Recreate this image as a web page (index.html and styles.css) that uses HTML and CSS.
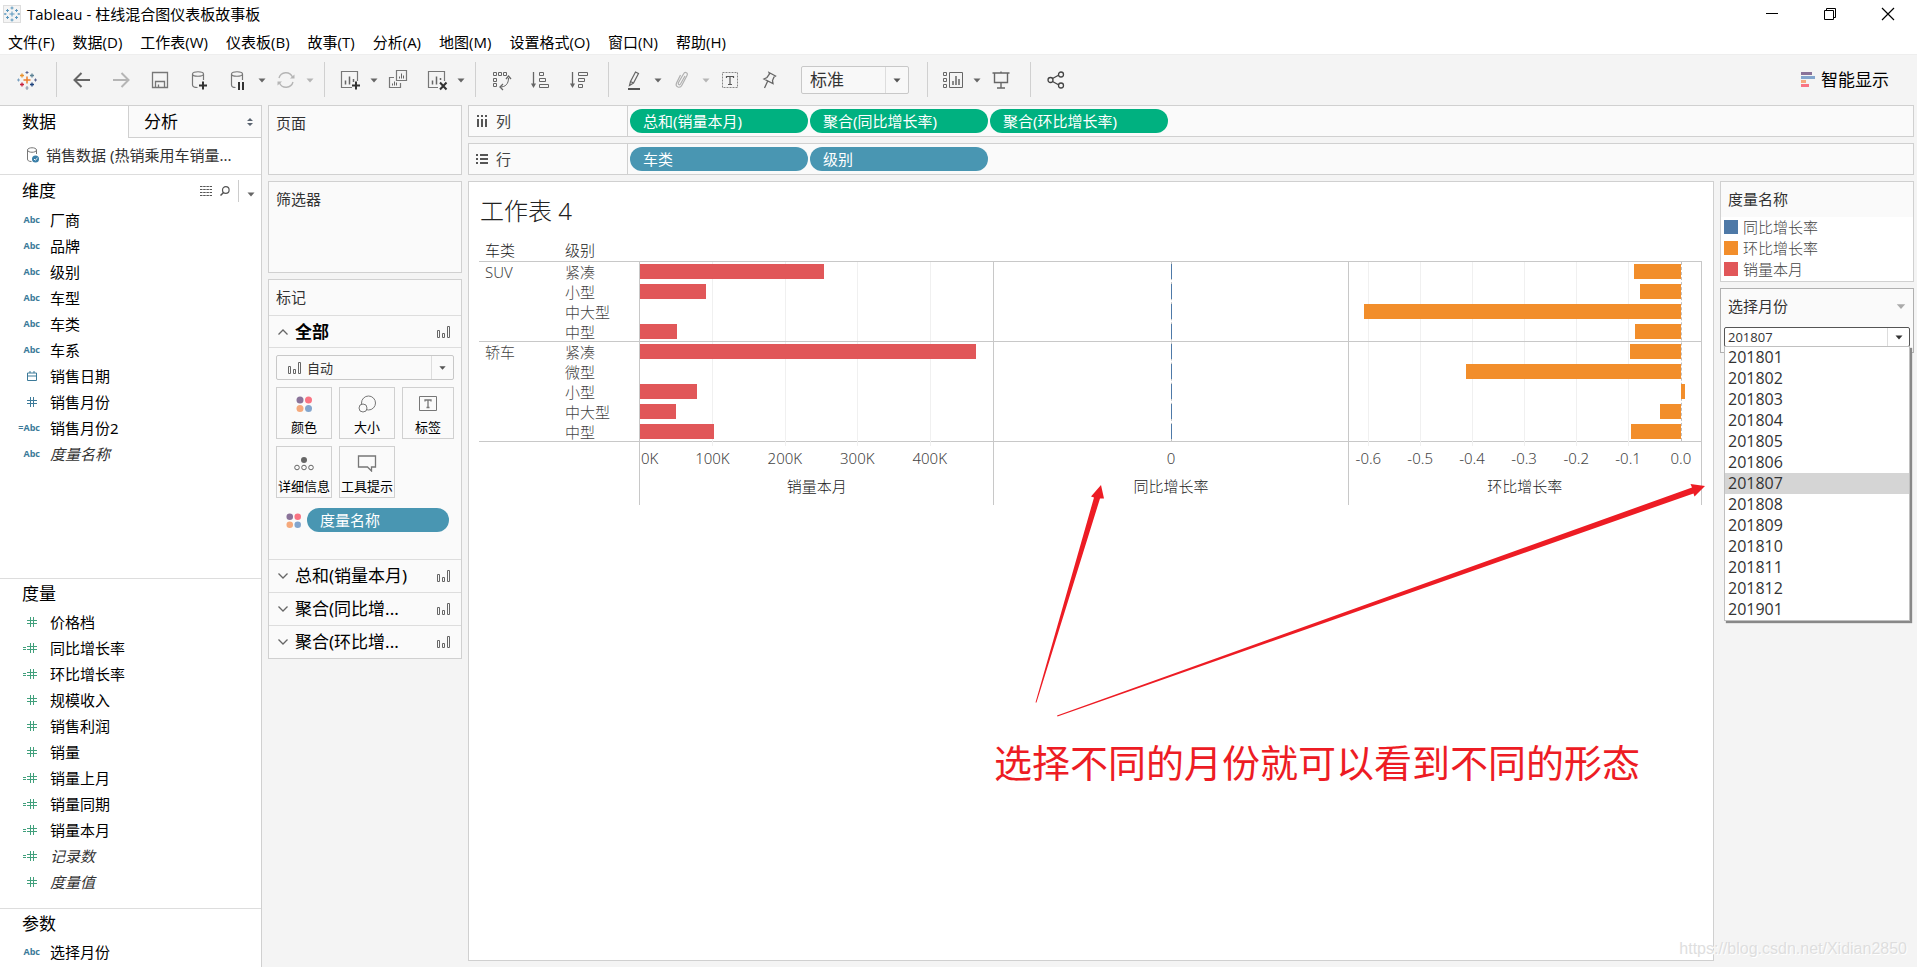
FILE: index.html
```html
<!DOCTYPE html>
<html lang="zh-CN">
<head>
<meta charset="utf-8">
<title>Tableau - 柱线混合图仪表板故事板</title>
<link rel="stylesheet" href="styles.css">
</head>
<body>
<svg class="defs" width="0" height="0" aria-hidden="true">
  <defs>
    <symbol id="caret" viewBox="0 0 10 10"><path d="M1.500 3.500h7L5 7.500z" fill="currentColor"/></symbol>
    <symbol id="hash" viewBox="0 0 10 10"><path d="M3.500 0v10M6.500 0v10M0 3.500h10M0 6.500h10" stroke="currentColor" fill="none"/></symbol>
    <symbol id="calc" viewBox="0 0 14 10"><path d="M7.500 0v10M10.500 0v10M4 3.500h10M4 6.500h10M0 4.500h3M0 6.500h3" stroke="currentColor" fill="none"/></symbol>
    <symbol id="bars" viewBox="0 0 14 14"><path d="M.5 5.500h2v7h-2zM5.500 8.500h2v4h-2zM10.500 1.500h2v11h-2z" stroke="#666" fill="none"/></symbol>
    <symbol id="dots" viewBox="0 0 16 16"><circle cx="4" cy="4" r="3.500" fill="#8a7399"/><circle cx="12.500" cy="4" r="3.500" fill="#f97483"/><circle cx="4" cy="12.500" r="3.500" fill="#f5a97c"/><circle cx="12.500" cy="12.500" r="3.500" fill="#83a5cd"/></symbol>
    <symbol id="chev" viewBox="0 0 10 10"><path d="M.5 2.500L5 7l4.500-4.500" stroke="#666" stroke-width="1.300" fill="none"/></symbol>
  </defs>
</svg>
<div class="app">
  <header class="titlebar">
    <svg class="appicon" viewBox="0 0 18 18"><rect x=".5" y=".5" width="17" height="17" fill="#f4f4f4" stroke="#ddd"/><path d="M9 6.500v5M6.500 9h5M9 1.500v3M7.500 3h3M9 13.500v3M7.500 15h3M4.500 4v3M3 5.500h3M13.500 4v3M12 5.500h3M4.500 11v3M3 12.500h3M13.500 11v3M12 12.500h3M2 8v2M1.500 9h2M16 8v2M14.500 9h2" stroke="#5a97bd" fill="none"/></svg>
    <h1 class="apptitle">Tableau - 柱线混合图仪表板故事板</h1>
    <div class="winbtns">
      <button type="button" aria-label="最小化"><svg viewBox="0 0 14 14"><path d="M1 6.500h12" stroke="#000"/></svg></button>
      <button type="button" aria-label="还原"><svg viewBox="0 0 14 14"><path d="M1.500 3.500h9v9h-9zM3.500 3.500v-2h9v9h-2" stroke="#000" fill="none"/></svg></button>
      <button type="button" aria-label="关闭"><svg viewBox="0 0 14 14"><path d="M1 1l12 12M13 1L1 13" stroke="#000" stroke-width="1.200"/></svg></button>
    </div>
  </header>
  <nav class="menubar">
    <button type="button">文件(F)</button><button type="button">数据(D)</button><button type="button">工作表(W)</button><button type="button">仪表板(B)</button><button type="button">故事(T)</button><button type="button">分析(A)</button><button type="button">地图(M)</button><button type="button">设置格式(O)</button><button type="button">窗口(N)</button><button type="button">帮助(H)</button>
  </nav>
  <div class="toolbar">
    <button type="button" class="tb" aria-label="起始页"><svg viewBox="0 0 20 20" fill="none"><path d="M10 6.500v7M6.500 10h7" stroke="#eb7c2a" stroke-width="1.500"/><path d="M10 1v3M8.500 2.500h3" stroke="#5b6591"/><path d="M10 16v4M8.500 18h3" stroke="#8692a8"/><path d="M5 3.500v4M3 5.500h4" stroke="#e8912b" stroke-width="1.300"/><path d="M15 3.500v4M13 5.500h4" stroke="#5d8396" stroke-width="1.300"/><path d="M5 12.500v4M3 14.500h4" stroke="#c9233f" stroke-width="1.300"/><path d="M15 12.500v4M13 14.500h4" stroke="#1f447e" stroke-width="1.300"/><path d="M1.500 8.500v3M0 10h3" stroke="#7ba0c0"/><path d="M18.500 8.500v3M17 10h3" stroke="#5b6591"/></svg></button>
    <span class="sep"></span>
    <button type="button" class="tb" aria-label="后退"><svg viewBox="0 0 20 20"><path d="M18 10H3M9.500 3L2.500 10l7 7" stroke="#666" stroke-width="2" fill="none"/></svg></button>
    <button type="button" class="tb" aria-label="前进"><svg viewBox="0 0 20 20"><path d="M2 10h15M10.500 3l7 7-7 7" stroke="#b5b5b5" stroke-width="2" fill="none"/></svg></button>
    <button type="button" class="tb" aria-label="保存"><svg viewBox="0 0 20 20"><path d="M2.500 2.500h15v15h-15zM5.500 17.500v-6h9v6M8.500 17.500v-3" stroke="#777" fill="none" stroke-width="1.300"/></svg></button>
    <button type="button" class="tb" aria-label="新建数据源"><svg viewBox="0 0 20 20"><path d="M3.500 4v11c0 1.500 2 2.500 5 2.500M14.500 4v6M3.500 4c0-3 11-3 11 0s-11 3-11 0" stroke="#777" fill="none" stroke-width="1.200"/><path d="M14 11.500v8M10 15.500h8" stroke="#333" stroke-width="2"/></svg></button>
    <span class="split"><button type="button" class="tb" aria-label="暂停自动更新"><svg viewBox="0 0 20 20"><path d="M3.500 4v11c0 1.500 2 2.500 4 2.500M14.500 4v6M3.500 4c0-3 11-3 11 0s-11 3-11 0" stroke="#777" fill="none" stroke-width="1.200"/><path d="M11 12v8M15 12v8" stroke="#333" stroke-width="2"/></svg></button><button type="button" class="ct" aria-label="更多"><svg><use href="#caret"/></svg></button></span>
    <span class="split off"><button type="button" class="tb" aria-label="刷新"><svg viewBox="0 0 20 20"><path d="M3 8a7.200 7.200 0 0 1 13.500-1M17 12a7.200 7.200 0 0 1-13.500 1" stroke="#b5b5b5" fill="none" stroke-width="1.400"/><path d="M18.500 4.500v4h-4.500zM1.500 15.500v-4h4.500z" fill="#b5b5b5"/></svg></button><button type="button" class="ct" aria-label="更多"><svg><use href="#caret"/></svg></button></span>
    <span class="sep"></span>
    <span class="split"><button type="button" class="tb" aria-label="新建工作表"><svg viewBox="0 0 20 20"><path d="M12 17.500H1.500v-16h16V11" stroke="#777" fill="none" stroke-width="1.200"/><path d="M5.500 14.500v-4M9.500 14.500v-8M13.500 12v-3" stroke="#666" stroke-width="1.500"/><path d="M16 11.500v8M12 15.500h8" stroke="#333" stroke-width="2"/></svg></button><button type="button" class="ct" aria-label="更多"><svg><use href="#caret"/></svg></button></span>
    <button type="button" class="tb" aria-label="复制工作表"><svg viewBox="0 0 20 20"><path d="M8.500 .5h10v10h-10zM6 7.500H1.500v10h11V13" stroke="#777" fill="none" stroke-width="1.200"/><path d="M11.500 8.500v-2M13.500 8.500v-5M15.500 8.500v-3M4.500 15.500v-2M6.500 15.500v-4M8.500 15.500v-3" stroke="#666"/></svg></button>
    <span class="split"><button type="button" class="tb" aria-label="清除工作表"><svg viewBox="0 0 20 20"><path d="M11 17.500H1.500v-16h16V11" stroke="#777" fill="none" stroke-width="1.200"/><path d="M5.500 14.500v-4M9.500 14.500v-8M13.500 10v-2" stroke="#666" stroke-width="1.500"/><path d="M13 12.500l6.500 7M19.500 12.500l-6.500 7" stroke="#333" stroke-width="2"/></svg></button><button type="button" class="ct" aria-label="更多"><svg><use href="#caret"/></svg></button></span>
    <span class="sep"></span>
    <button type="button" class="tb" aria-label="交换行和列"><svg viewBox="0 0 20 20"><path d="M2.500 2.500h3v3h-3zM7.500 2.500h3v3h-3zM12.500 2.500h3v3h-3zM2.500 8.500h3v3h-3zM2.500 13.500h3v3h-3zM17.500 8c0 6-3 9-8.500 9" stroke="#666" fill="none"/><path d="M15 9l2.500-3L20 9M12 14l-3 3 3 3" stroke="#666" stroke-width="1.300" fill="none"/></svg></button>
    <button type="button" class="tb" aria-label="升序排序"><svg viewBox="0 0 20 20"><path d="M3.500 2v14" stroke="#666" fill="none" stroke-width="1.300"/><path d="M1 13.500h5L3.500 18z" fill="#666"/><path d="M9.500 2.500h4v3h-4zM9.500 8.500h6v3h-6zM9.500 14.500h9v3h-9z" stroke="#666" fill="none"/></svg></button>
    <button type="button" class="tb" aria-label="降序排序"><svg viewBox="0 0 20 20"><path d="M3.500 2v14" stroke="#666" fill="none" stroke-width="1.300"/><path d="M1 13.500h5L3.500 18z" fill="#666"/><path d="M9.500 2.500h9v3h-9zM9.500 8.500h6v3h-6zM9.500 14.500h4v3h-4z" stroke="#666" fill="none"/></svg></button>
    <span class="sep"></span>
    <span class="split"><button type="button" class="tb" aria-label="突出显示"><svg viewBox="0 0 20 20"><path d="M5.500 15.500l1-4L11.500 2l3 1.500L9.500 13zM6.500 11.500l3 1.500" stroke="#666" fill="none" stroke-width="1.200"/><path d="M4 19h12" stroke="#555" stroke-width="2"/></svg></button><button type="button" class="ct" aria-label="更多"><svg><use href="#caret"/></svg></button></span>
    <span class="split off"><button type="button" class="tb" aria-label="组成员"><svg viewBox="0 0 20 20"><path d="M13 6l-4.500 8c-1 1.500-3 .5-2-1.500L11.500 4c1.500-3 5-1 3.500 1.500l-5 9.500c-2 4-7 2-5.500-2L8.500 5" stroke="#b0b0b0" fill="none" stroke-width="1.200"/></svg></button><button type="button" class="ct" aria-label="更多"><svg><use href="#caret"/></svg></button></span>
    <button type="button" class="tb" aria-label="显示标记标签"><svg viewBox="0 0 20 20"><path d="M2.500 2.500h15v15h-15z" stroke="#888" stroke-dasharray="2 1" fill="none"/><path d="M6.500 8V6.500h7V8M10 6.500v8M8 14.500h4" stroke="#555" stroke-width="1.200" fill="none"/></svg></button>
    <button type="button" class="tb" aria-label="固定"><svg viewBox="0 0 20 20"><path d="M10 2.500l6.500 3.500-1.500 1-1.500 3.500.5 3-9-4.500L8 7.500 10.500 4zM8.500 11.500L5.500 18" stroke="#666" fill="none" stroke-width="1.300"/></svg></button>
    <span class="fit"><select aria-label="适合"><option>标准</option></select><svg><use href="#caret"/></svg></span>
    <span class="sep"></span>
    <span class="split"><button type="button" class="tb" aria-label="显示卡"><svg viewBox="0 0 20 20"><path d="M.5 2.500h3v3h-3zM.5 8.500h3v3h-3zM.5 14.500h3v3h-3zM6.500 2.500h13v15h-13z" stroke="#666" fill="none"/><path d="M10 15v-4M13 15V6M16 15V9" stroke="#666" stroke-width="1.500"/></svg></button><button type="button" class="ct" aria-label="更多"><svg><use href="#caret"/></svg></button></span>
    <button type="button" class="tb" aria-label="演示模式"><svg viewBox="0 0 20 20"><path d="M1.500 3h17M3.500 3v9.500h13V3M10 1.500V3M10 12.500V18M6 18h8" stroke="#666" fill="none" stroke-width="1.400"/></svg></button>
    <span class="sep"></span>
    <button type="button" class="tb" aria-label="共享"><svg viewBox="0 0 20 20"><path d="M6.500 8.500l6.500-3.500M6.500 11.500l6.500 3.500" stroke="#444" stroke-width="1.300"/><circle cx="4.500" cy="10" r="2.500" stroke="#444" fill="none" stroke-width="1.300"/><circle cx="15" cy="4.500" r="2.500" stroke="#444" fill="none" stroke-width="1.300"/><circle cx="15" cy="15.500" r="2.500" stroke="#444" fill="none" stroke-width="1.300"/></svg></button>
    <button type="button" class="showme"><svg viewBox="0 0 14 16"><path d="M0 0h11v3H0z" fill="#8a7399"/><path d="M0 4h14v3H0z" fill="#83a5cd"/><path d="M0 8h5v3H0z" fill="#f5a97c"/><path d="M0 12h8v3H0z" fill="#f97483"/></svg>智能显示</button>
  </div>
  <div class="body">
    <aside class="datapane">
      <div class="tabs">
        <button type="button" class="tab on">数据</button>
        <button type="button" class="tab">分析<svg viewBox="0 0 6 8"><path d="M0 3l3-3 3 3zM0 5l3 3 3-3z" fill="#5a6470"/></svg></button>
      </div>
      <div class="source"><svg viewBox="0 0 14 16"><path d="M1.500 3v9c0 1.500 1 2.500 4 2.500M10.500 3v4M1.500 3c0-3 9-3 9 0s-9 3-9 0" stroke="#777" fill="none"/><circle cx="9.500" cy="12" r="3.500" fill="#3a7fa8"/><path d="M8 12l1.200 1.200L11.500 11" stroke="#fff" fill="none"/></svg>销售数据 (热销乘用车销量...</div>
      <div class="sections">
        <section class="sec dim">
          <div class="sechead"><h2>维度</h2>
            <div class="tools">
              <svg class="grid" viewBox="0 0 12 10"><path d="M0 .5h12M0 3.500h12M0 6.500h12M0 9.500h12" stroke="#555" stroke-dasharray="2.500 .7"/></svg>
              <svg class="mag" viewBox="0 0 10 10"><circle cx="5.800" cy="4" r="3.300" stroke="#555" fill="none" stroke-width="1.200"/><path d="M3.500 6.500L.5 9.500" stroke="#555" stroke-width="1.500"/></svg>
              <button type="button" class="ct more" aria-label="维度菜单"><svg><use href="#caret"/></svg></button>
            </div>
          </div>
          <ul class="fields blue">
            <li><span class="ic">Abc</span>厂商</li><li><span class="ic">Abc</span>品牌</li><li><span class="ic">Abc</span>级别</li><li><span class="ic">Abc</span>车型</li><li><span class="ic">Abc</span>车类</li><li><span class="ic">Abc</span>车系</li>
            <li><span class="ic n"><svg class="h" viewBox="0 0 10 10"><path d="M.5 2h9v7.500h-9zM.5 5h9M3 0v2M7 0v2" stroke="currentColor" fill="none"/></svg></span>销售日期</li>
            <li><span class="ic n"><svg class="h"><use href="#hash"/></svg></span>销售月份</li>
            <li><span class="ic">=Abc</span>销售月份2</li>
            <li class="it"><span class="ic">Abc</span>度量名称</li>
          </ul>
        </section>
        <section class="sec">
          <div class="sechead"><h2>度量</h2></div>
          <ul class="fields green">
            <li><span class="ic n"><svg class="h"><use href="#hash"/></svg></span>价格档</li>
            <li><span class="ic n"><svg class="c"><use href="#calc"/></svg></span>同比增长率</li>
            <li><span class="ic n"><svg class="c"><use href="#calc"/></svg></span>环比增长率</li>
            <li><span class="ic n"><svg class="h"><use href="#hash"/></svg></span>规模收入</li>
            <li><span class="ic n"><svg class="h"><use href="#hash"/></svg></span>销售利润</li>
            <li><span class="ic n"><svg class="h"><use href="#hash"/></svg></span>销量</li>
            <li><span class="ic n"><svg class="c"><use href="#calc"/></svg></span>销量上月</li>
            <li><span class="ic n"><svg class="c"><use href="#calc"/></svg></span>销量同期</li>
            <li><span class="ic n"><svg class="c"><use href="#calc"/></svg></span>销量本月</li>
            <li class="it"><span class="ic n"><svg class="c"><use href="#calc"/></svg></span>记录数</li>
            <li class="it"><span class="ic n"><svg class="h"><use href="#hash"/></svg></span>度量值</li>
          </ul>
        </section>
        <section class="sec">
          <div class="sechead"><h2>参数</h2></div>
          <ul class="fields blue"><li><span class="ic">Abc</span>选择月份</li></ul>
        </section>
      </div>
    </aside>
    <div class="cards">
      <section class="card pages"><h3>页面</h3></section>
      <section class="card filters"><h3>筛选器</h3></section>
      <section class="card marks">
        <h3>标记</h3>
        <button type="button" class="mrow all"><svg class="chev up"><use href="#chev"/></svg><b>全部</b><svg class="bars"><use href="#bars"/></svg></button>
        <div class="mbody">
          <div class="mtype"><svg class="bars"><use href="#bars"/></svg><select aria-label="标记类型"><option>自动</option></select><svg class="cr"><use href="#caret"/></svg></div>
          <div class="mgrid">
            <button type="button"><svg viewBox="0 0 20 18"><use href="#dots" x="2" y="1" width="16" height="16"/></svg>颜色</button>
            <button type="button"><svg viewBox="0 0 20 18"><circle cx="11.500" cy="8" r="7" stroke="#777" fill="none"/><circle cx="6" cy="13" r="4" stroke="#777" fill="#fafafa"/></svg>大小</button>
            <button type="button"><svg viewBox="0 0 20 18"><path d="M1.500 1.500h17v14h-17z" stroke="#777" fill="none"/><path d="M7 6.500V5h6v1.500M10 5v7.500M8.500 12.500h3" stroke="#777" stroke-width="1.300" fill="none"/></svg>标签</button>
            <button type="button"><svg viewBox="0 0 20 18"><circle cx="10" cy="6" r="3" fill="#666"/><g fill="none" stroke="#666"><circle cx="3" cy="13.500" r="2.300"/><circle cx="10" cy="13.500" r="2.300"/><circle cx="17" cy="13.500" r="2.300"/></g></svg>详细信息</button>
            <button type="button"><svg viewBox="0 0 20 18"><path d="M1.500 2h17v11h-4v4l-4-4h-9z" stroke="#777" stroke-width="1.300" fill="none"/></svg>工具提示</button>
          </div>
          <div class="mpill"><svg><use href="#dots"/></svg><button type="button" class="pill blue">度量名称</button></div>
        </div>
        <button type="button" class="mrow"><svg class="chev"><use href="#chev"/></svg><span>总和(销量本月)</span><svg class="bars"><use href="#bars"/></svg></button>
        <button type="button" class="mrow"><svg class="chev"><use href="#chev"/></svg><span>聚合(同比增...</span><svg class="bars"><use href="#bars"/></svg></button>
        <button type="button" class="mrow"><svg class="chev"><use href="#chev"/></svg><span>聚合(环比增...</span><svg class="bars"><use href="#bars"/></svg></button>
      </section>
    </div>
    <main class="main">
      <div class="shelf"><div class="shlabel"><svg viewBox="0 0 12 12"><path d="M2 0v2M6 0v2M10 0v2M2 4v8M6 4v8M10 4v8" stroke="#555" stroke-width="2"/></svg>列</div><button type="button" class="pill green">总和(销量本月)</button><button type="button" class="pill green">聚合(同比增长率)</button><button type="button" class="pill green">聚合(环比增长率)</button></div>
      <div class="shelf"><div class="shlabel"><svg viewBox="0 0 12 12"><path d="M0 2h2M0 6h2M0 10h2M4 2h8M4 6h8M4 10h8" stroke="#555" stroke-width="2"/></svg>行</div><button type="button" class="pill blue">车类</button><button type="button" class="pill blue">级别</button></div>
      <div class="work">
        <section class="sheet">
          <h2 class="sheettitle">工作表 4</h2>
          <div class="viz">
            <div class="hd">车类</div><div class="hd">级别</div><div class="hd fill"></div>
            <div class="cats"><div class="grp g4">SUV</div><div class="grp g5">轿车</div></div>
            <div class="cats"><div class="grp g4"><span>紧凑</span><span>小型</span><span>中大型</span><span>中型</span></div><div class="grp g5"><span>紧凑</span><span>微型</span><span>小型</span><span>中大型</span><span>中型</span></div></div>
            <div class="plot">
              <i class="gl" style="left:20.500%"></i><i class="gl" style="left:41%"></i><i class="gl" style="left:61.500%"></i><i class="gl" style="left:82%"></i>
              <div class="row"><i class="bar red" style="width:52%"></i></div>
              <div class="row"><i class="bar red" style="width:18.700%"></i></div>
              <div class="row"></div>
              <div class="row"><i class="bar red" style="width:10.500%"></i></div>
              <div class="row top"><i class="bar red" style="width:95%"></i></div>
              <div class="row"></div>
              <div class="row"><i class="bar red" style="width:16.200%"></i></div>
              <div class="row"><i class="bar red" style="width:10.200%"></i></div>
              <div class="row"><i class="bar red" style="width:21%"></i></div>
            </div>
            <div class="plot">
              <i class="zero" style="left:50%"></i>
              <div class="row"><i class="thin"></i></div><div class="row"><i class="thin"></i></div><div class="row"><i class="thin"></i></div><div class="row"><i class="thin"></i></div><div class="row top"><i class="thin"></i></div><div class="row"><i class="thin"></i></div><div class="row"><i class="thin"></i></div><div class="row"><i class="thin"></i></div><div class="row"><i class="thin"></i></div>
            </div>
            <div class="plot last">
              <i class="gl" style="left:5.600%"></i><i class="gl" style="left:20.300%"></i><i class="gl" style="left:35%"></i><i class="gl" style="left:49.800%"></i><i class="gl" style="left:64.600%"></i><i class="gl" style="left:79.300%"></i><i class="zero" style="left:94.300%"></i>
              <div class="row"><i class="bar org" style="margin-left:81%;width:13.300%"></i></div>
              <div class="row"><i class="bar org" style="margin-left:82.600%;width:11.700%"></i></div>
              <div class="row"><i class="bar org" style="margin-left:4.400%;width:89.900%"></i></div>
              <div class="row"><i class="bar org" style="margin-left:81.300%;width:13%"></i></div>
              <div class="row top"><i class="bar org" style="margin-left:79.800%;width:14.500%"></i></div>
              <div class="row"><i class="bar org" style="margin-left:33.200%;width:61.100%"></i></div>
              <div class="row"><i class="bar org" style="margin-left:94.300%;width:1.100%"></i></div>
              <div class="row"><i class="bar org" style="margin-left:88.400%;width:5.900%"></i></div>
              <div class="row"><i class="bar org" style="margin-left:80.200%;width:14.100%"></i></div>
            </div>
            <div class="foot"></div>
            <div class="axis"><div class="ticks"><span class="first">0K</span><span style="left:20.500%">100K</span><span style="left:41%">200K</span><span style="left:61.500%">300K</span><span style="left:82%">400K</span></div><p>销量本月</p></div>
            <div class="axis"><div class="ticks"><span style="left:50%">0</span></div><p>同比增长率</p></div>
            <div class="axis last"><div class="ticks"><span style="left:5.600%">-0.6</span><span style="left:20.300%">-0.5</span><span style="left:35%">-0.4</span><span style="left:49.800%">-0.3</span><span style="left:64.600%">-0.2</span><span style="left:79.300%">-0.1</span><span style="left:94.300%">0.0</span></div><p>环比增长率</p></div>
          </div>
          <svg class="arrows" viewBox="0 0 690 240" fill="#ed1c24"><path d="M14.500 221.500L73 16.500 70 15.500 80 4 83 17.500 79 17.500 15.500 221.500z"/><path d="M36 234.500L671 6.500 669.500 3 684 5 673.500 15.500 672.500 12.500 36.500 235.500z"/></svg>
          <p class="note">选择不同的月份就可以看到不同的形态</p>
        </section>
        <aside class="side">
          <section class="legend"><h3>度量名称</h3>
            <ul><li><i class="sw b"></i><span>同比增长率</span></li><li><i class="sw o"></i><span>环比增长率</span></li><li><i class="sw r"></i><span>销量本月</span></li></ul>
          </section>
          <section class="param">
            <h3><label for="month">选择月份</label><svg><use href="#caret"/></svg></h3>
            <div class="combo"><select id="month"><option>201807</option></select><svg><use href="#caret"/></svg>
              <ul class="list" role="listbox" aria-label="选择月份">
                <li role="option">201801</li><li role="option">201802</li><li role="option">201803</li><li role="option">201804</li><li role="option">201805</li><li role="option">201806</li><li role="option" aria-selected="true" class="sel">201807</li><li role="option">201808</li><li role="option">201809</li><li role="option">201810</li><li role="option">201811</li><li role="option">201812</li><li role="option">201901</li>
              </ul>
            </div>
          </section>
        </aside>
      </div>
    </main>
  </div>
  <div class="mark">https://blog.csdn.net/Xidian2850</div>
</div>
</body>
</html>
```

FILE: styles.css
```css
* { box-sizing: border-box; margin: 0; padding: 0; }
body { font-family: "Noto Sans", "Noto Sans CJK SC", sans-serif; font-size: 15px; line-height: 20px; color: #000; background: #f4f4f4; }
button, select { font: inherit; color: inherit; background: none; border: 0; text-align: left; white-space: nowrap; }
select { appearance: none; outline: 0; }
ul { list-style: none; }
h1, h2, h3 { font-weight: 400; }
svg { display: block; flex: none; }
.defs { position: absolute; }
.app { position: relative; display: flex; flex-direction: column; height: 100vh; overflow: hidden; }

.titlebar { display: flex; align-items: center; height: 28px; padding-left: 3px; background: #fff; }
.appicon { width: 18px; height: 18px; }
.apptitle { flex: 1; margin-left: 6px; font-size: 15px; font-family: "Open Sans", "Noto Sans CJK SC", sans-serif; }
.winbtns { display: flex; gap: 2px; padding-right: 1px; }
.winbtns button { display: flex; justify-content: center; align-items: center; width: 56px; height: 28px; }
.winbtns svg { width: 14px; height: 14px; }
.menubar { display: flex; gap: 18px; align-items: center; height: 26px; padding: 1px 8px 0; background: #fff; font-family: "Open Sans", "Noto Sans CJK SC", sans-serif; }

.toolbar { display: flex; align-items: center; height: 51px; padding: 0 28px 1px 17px; border-top: 1px solid #eee; }
.tb { width: 20px; height: 20px; margin-right: 19px; }
.tb svg { width: 20px; height: 20px; overflow: visible; }
.split { display: flex; align-items: center; gap: 9px; margin-right: 9px; }
.split .tb { margin-right: 0; }
.ct { width: 10px; height: 10px; color: #666; }
.ct svg { width: 10px; height: 10px; }
.off .ct { color: #b5b5b5; }
.sep { width: 1px; height: 35px; margin-right: 15px; background: #d0d0d0; }
.fit { position: relative; width: 108px; height: 28px; margin: 0 18px 0 3px; border: 1px solid #c8c8c8; border-radius: 2px; background: #f8f8f8; }
.fit select { width: 100%; height: 26px; padding-left: 8px; font-size: 17px; color: #333; }
.fit svg { position: absolute; right: 6px; top: 8px; width: 10px; height: 10px; color: #555; }
.fit::after { content: ""; position: absolute; top: 0; right: 22px; width: 1px; height: 26px; background: #ddd; }
.showme { display: flex; align-items: center; gap: 6px; margin-left: auto; font-size: 17px; }
.showme svg { width: 14px; height: 16px; }

.body { flex: 1; min-height: 0; display: grid; grid-template-columns: 262px 194px minmax(0, 1fr); gap: 6px; padding-right: 3px; }

.datapane { display: flex; flex-direction: column; background: #fff; border-right: 1px solid #d0d0d0; border-top: 1px solid #d0d0d0; }
.tabs { display: grid; grid-template-columns: 128px 1fr; height: 32px; }
.tab { display: flex; align-items: center; justify-content: space-between; padding: 0 8px 0 15px; font-size: 17px; background: #fafafa; border-left: 1px solid #d0d0d0; border-bottom: 1px solid #d0d0d0; }
.tab.on { padding-left: 22px; background: #fff; border: 0; }
.tab svg { width: 6px; height: 8px; }
.source { display: flex; align-items: center; gap: 6px; height: 36px; padding: 0 0 2px 26px; color: #333; white-space: nowrap; }
.source svg { width: 14px; height: 16px; }
.sections { flex: 1; min-height: 0; display: grid; grid-template-rows: 404fr 330fr 59fr; }
.sec { min-height: 0; border-top: 1px solid #ddd; }
.sechead { display: flex; align-items: center; justify-content: space-between; height: 30px; padding-left: 22px; }
.dim .sechead { height: 32px; }
.sechead h2 { font-size: 17px; }
.tools { display: flex; align-items: center; gap: 8px; height: 22px; padding-right: 6px; }
.grid { width: 12px; height: 10px; }
.mag { width: 10px; height: 10px; }
.more { width: 17px; height: 22px; padding-left: 7px; border-left: 1px solid #ccc; }
.more svg { margin-top: 6px; }
.fields li { display: flex; align-items: center; height: 26px; padding-left: 17px; }
.ic { display: flex; justify-content: flex-end; width: 23px; margin-right: 10px; font: bold 9px/10px "Open Sans", sans-serif; }
.ic.n { padding-right: 3px; }
.blue .ic { color: #3c7a99; }
.green .ic { color: #41a07c; }
.h { width: 10px; height: 10px; }
.c { width: 14px; height: 10px; }
.it { font-style: italic; color: #333; }
.it .ic { font-style: normal; }

.cards { display: flex; flex-direction: column; gap: 6px; }
.card { background: #fafafa; border: 1px solid #d0d0d0; }
.card h3 { padding: 7px 7px 8px; font-size: 15px; color: #333; }
.pages { height: 70px; }
.filters { height: 92px; }
.mrow { display: flex; align-items: center; width: 100%; height: 33px; padding: 0 10px 0 9px; font-size: 17px; border-top: 1px solid #ddd; }
.mrow.all { height: 32px; }
.mrow b, .mrow span { flex: 1; margin-left: 7px; }
.chev { width: 10px; height: 10px; }
.up { transform: rotate(180deg); }
.bars { width: 14px; height: 14px; }
.mbody { display: flex; flex-direction: column; padding: 7px 7px 27px; border-top: 1px solid #ddd; }
.mtype { position: relative; display: flex; align-items: center; height: 25px; padding-left: 11px; border: 1px solid #c8c8c8; border-radius: 2px; }
.mtype select { flex: 1; height: 23px; padding-left: 5px; font-size: 13px; color: #333; }
.mtype .cr { width: 22px; height: 23px; padding: 6px; border-left: 1px solid #ddd; color: #555; }
.mgrid { display: grid; grid-template-columns: 56px 56px 52px; gap: 7px; margin-top: 7px; }
.mgrid button { display: flex; flex-direction: column; align-items: center; gap: 5px; height: 52px; padding-top: 7px; font-size: 13px; line-height: 18px; border: 1px solid #d0d0d0; }
.mgrid svg { width: 20px; height: 18px; }
.mpill { display: flex; align-items: center; gap: 6px; margin: 10px 5px 0 10px; }
.mpill svg { width: 15px; height: 15px; }
.pill { height: 24px; padding: 0 13px; border-radius: 12px; color: #fff; }
.mpill .pill { flex: 1; }
.pill.green { background: #00b180; }
.pill.blue { background: #4996b2; }

.main { display: flex; flex-direction: column; gap: 6px; }
.shelf { display: flex; align-items: center; gap: 2px; height: 32px; background: #fafafa; border: 1px solid #d0d0d0; }
.shlabel { display: flex; align-items: center; gap: 8px; width: 159px; height: 30px; padding-left: 7px; border-right: 1px solid #d0d0d0; color: #444; }
.shlabel svg { width: 12px; height: 12px; }
.shelf .pill { width: 178px; }
.work { flex: 1; min-height: 0; display: grid; grid-template-columns: minmax(0, 1fr) 194px; gap: 6px; }
.sheet { position: relative; margin-bottom: 6px; padding: 13px 11px 14px 10px; background: #fff; border: 1px solid #d0d0d0; }
.sheettitle { padding-left: 1px; font-size: 24px; font-weight: 300; line-height: 32px; color: #222; }
.viz { display: grid; grid-template-columns: 80px 80px repeat(3, minmax(0, 1fr)); margin-top: 13px; font-weight: 300; color: #444; }
.hd { height: 22px; padding-left: 6px; color: #222; border-bottom: 1px solid #c8c8c8; }
.fill { grid-column: 3 / 6; }
.grp { padding-left: 6px; border-bottom: 1px solid #c8c8c8; }
.grp span { display: block; height: 20px; }
.g4 { height: 80px; }
.g5 { height: 100px; }
.plot { position: relative; height: 180px; border-left: 1px solid #c8c8c8; border-bottom: 1px solid #c8c8c8; }
.last { border-right: 1px solid #c8c8c8; }
.row { position: relative; height: 20px; padding-top: 2px; }
.top::before { content: ""; position: absolute; inset: -1px 0 auto; height: 1px; background: #c8c8c8; }
.bar { display: block; height: 15px; }
.red { background: #e15759; }
.org { background: #f28e2b; }
.thin { position: absolute; top: 2px; left: 50%; height: 15px; border-left: 1px solid #4e79a7; }
.gl { position: absolute; top: 0; bottom: -5px; width: 1px; background: #f0f0f0; }
.zero { position: absolute; top: 0; bottom: 0; border-left: 1px dashed #c0c0c0; }
.foot { grid-column: 1 / 3; }
.axis { height: 63px; padding-top: 6px; border-left: 1px solid #c8c8c8; }
.ticks { position: relative; height: 20px; }
.ticks span { position: absolute; transform: translateX(-50%); }
.ticks .first { left: 1px; transform: none; }
.axis p { margin-top: 8px; text-align: center; color: #222; }
.arrows { position: absolute; left: 552px; top: 299px; width: 690px; height: 240px; overflow: visible; }
.note { position: absolute; left: 525px; top: 554px; font-size: 38px; line-height: 52px; color: #ed1c24; white-space: nowrap; }

.side { display: flex; flex-direction: column; gap: 6px; }
.side h3 { display: flex; justify-content: space-between; align-items: center; height: 35px; padding: 0 7px 2px; font-size: 15px; color: #333; }
.side h3 svg { width: 12px; height: 12px; color: #aaa; }
.legend { background: #fafafa; border: 1px solid #d0d0d0; }
.legend ul { padding: 0 3px 1px; background: #fff; }
.legend li { display: flex; align-items: center; gap: 5px; height: 21px; padding-bottom: 2px; color: #444; font-weight: 300; }
.sw { width: 14px; height: 14px; }
.b { background: #4e79a7; }
.o { background: #f28e2b; }
.r { background: #e15759; }
.param { height: 65px; padding: 0 3px; background: #fafafa; border: 1px solid #b0b0b0; }
.param h3 { height: 38px; padding: 0 3px 5px 4px; }
.combo { position: relative; font-family: "Open Sans", sans-serif; color: #333; }
.combo select { display: block; width: 100%; height: 20px; padding-left: 3px; font-size: 13px; line-height: 16px; background: #fff; border: 1px solid #555; border-radius: 2px; }
.combo svg { position: absolute; right: 6px; top: 5px; width: 10px; height: 10px; }
.combo::after { content: ""; position: absolute; top: 1px; right: 22px; width: 1px; height: 18px; background: #ddd; }
.list { position: absolute; z-index: 1; top: 19px; left: 0; right: 0; background: #fff; border: 1px solid #c0c0c0; box-shadow: 2px 2px 1px #888; }
.list li { height: 21px; padding-left: 3px; font-size: 16px; line-height: 21px; }
.list .sel { background: #d5d5d5; }
.mark { position: absolute; right: 10px; bottom: 8px; font: 16px/20px "Liberation Sans", sans-serif; color: #dedede; text-shadow: 1px 1px 0 #fff; }
```
